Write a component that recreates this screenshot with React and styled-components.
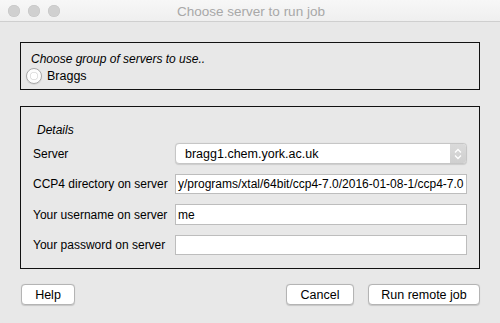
import React from "react";
import styled, { createGlobalStyle } from "styled-components";

const Global = createGlobalStyle`
  html, body { margin: 0; padding: 0; background: #e8e8e8; }
  body { font-family: "Liberation Sans", Arial, sans-serif; font-size: 12px; color: #000; }
`;

const Win = styled.div`
  width: 500px;
  height: 323px;
  background: #e8e8e8;
  display: flex;
  flex-direction: column;
  overflow: hidden;
  border-radius: 0 0 5px 5px;
  box-sizing: border-box;
`;

const TitleBar = styled.div`
  height: 21px;
  flex: none;
  background: linear-gradient(#f7f7f7, #efefef);
  border-bottom: 1px solid #cfcfcf;
  position: relative;
  display: flex;
  align-items: center;
  justify-content: center;
`;

const Lights = styled.div`
  position: absolute;
  left: 8px;
  top: 5px;
  display: flex;
  gap: 8px;
`;

const Light = styled.span`
  width: 12px;
  height: 12px;
  border-radius: 50%;
  background: #d0d0d0;
  box-shadow: inset 0 0 0 0.5px #c4c4c4;
`;

const Title = styled.div`
  font-size: 13.5px;
  color: #a8a8a8;
  padding-left: 2px;
  padding-top: 1px;
`;

const Body = styled.div`
  flex: 1;
  padding: 20px 20px 0 20px;
  display: flex;
  flex-direction: column;
`;

const Group = styled.div`
  border: 1px solid #111;
  box-sizing: border-box;
  height: ${(p) => p.h}px;
  margin-bottom: ${(p) => p.mb || 0}px;
`;

const GroupOne = styled(Group)`
  padding: 9px 0 0 10px;
`;

const GroupTitle = styled.div`
  font-style: italic;
  font-size: 12px;
  line-height: 15px;
`;

const RadioRow = styled.label`
  display: flex;
  align-items: center;
  gap: 5px;
  margin-left: -5px;
  margin-top: 1px;
  font-size: 12.5px;
`;

const Radio = styled.span`
  width: 14px;
  height: 14px;
  border-radius: 50%;
  border: 1px solid #a9a9a9;
  background: radial-gradient(circle at 50% 50%, #ffffff 0 3px, #e2e2e2 3.5px 4px, #fdfdfd 4.5px);
  box-shadow: 0 0.5px 1px rgba(0,0,0,0.15);
`;

const GroupTwo = styled(Group)`
  padding: 16px 12px 0 12px;
`;

const Details = styled.div`
  font-style: italic;
  font-size: 12px;
  line-height: 15px;
  margin-left: 4px;
  margin-bottom: 5px;
`;

const Rows = styled.div`
  display: grid;
  grid-template-columns: 142px 292px;
  row-gap: 10px;
  align-items: center;
`;

const Label = styled.div`
  font-size: 12px;
  white-space: nowrap;
`;

const Select = styled.div`
  height: 21px;
  box-sizing: border-box;
  border: 1px solid #c6c6c6;
  border-radius: 4px;
  background: #fff;
  display: flex;
  align-items: center;
  overflow: hidden;
  box-shadow: 0 0.5px 1px rgba(0,0,0,0.12);
`;

const SelectText = styled.div`
  flex: 1;
  padding-left: 9px;
  font-size: 12.5px;
`;

const Stepper = styled.div`
  width: 16px;
  height: 100%;
  background: linear-gradient(#dadada, #cfcfcf);
  display: flex;
  align-items: center;
  justify-content: center;
`;

const Input = styled.div`
  height: ${(p) => p.h || 21}px;
  box-sizing: border-box;
  border: 1px solid #bdbdbd;
  background: #fff;
  display: flex;
  align-items: center;
  padding-left: 2px;
  font-size: 12px;
  overflow: hidden;
  white-space: nowrap;
`;

const Buttons = styled.div`
  display: flex;
  margin-top: 15px;
  align-items: center;
`;

const Spacer = styled.div`
  flex: 1;
`;

const Button = styled.button`
  height: 21px;
  width: ${(p) => p.w}px;
  margin-left: ${(p) => p.ml || 0}px;
  box-sizing: border-box;
  border: 1px solid #b4b4b4;
  border-radius: 4px;
  background: #fff;
  font-family: "Liberation Sans", Arial, sans-serif;
  font-size: 12.5px;
  color: #000;
  padding: 0;
  box-shadow: 0 0.5px 1px rgba(0,0,0,0.15);
`;

export default function App() {
  return (
    <>
      <Global />
      <Win>
        <TitleBar>
          <Lights>
            <Light />
            <Light />
            <Light />
          </Lights>
          <Title>Choose server to run job</Title>
        </TitleBar>
        <Body>
          <GroupOne h={48} mb={16}>
            <GroupTitle>Choose group of servers to use..</GroupTitle>
            <RadioRow>
              <Radio />
              Braggs
            </RadioRow>
          </GroupOne>
          <GroupTwo h={163}>
            <Details>Details</Details>
            <Rows>
              <Label>Server</Label>
              <Select>
                <SelectText>bragg1.chem.york.ac.uk</SelectText>
                <Stepper>
                  <svg width="8" height="12" viewBox="0 0 8 12">
                    <path d="M1 4.5 L4 1.5 L7 4.5 M1 7.5 L4 10.5 L7 7.5" fill="none" stroke="#fff" strokeWidth="1.3" />
                  </svg>
                </Stepper>
              </Select>
              <Label>CCP4 directory on server</Label>
              <Input h={20}>y/programs/xtal/64bit/ccp4-7.0/2016-01-08-1/ccp4-7.0</Input>
              <Label>Your username on server</Label>
              <Input>me</Input>
              <Label>Your password on server</Label>
              <Input h={20}></Input>
            </Rows>
          </GroupTwo>
          <Buttons>
            <Button w={54} ml={1}>Help</Button>
            <Spacer />
            <Button w={68}>Cancel</Button>
            <Button w={112} ml={14}>Run remote job</Button>
          </Buttons>
        </Body>
      </Win>
    </>
  );
}
